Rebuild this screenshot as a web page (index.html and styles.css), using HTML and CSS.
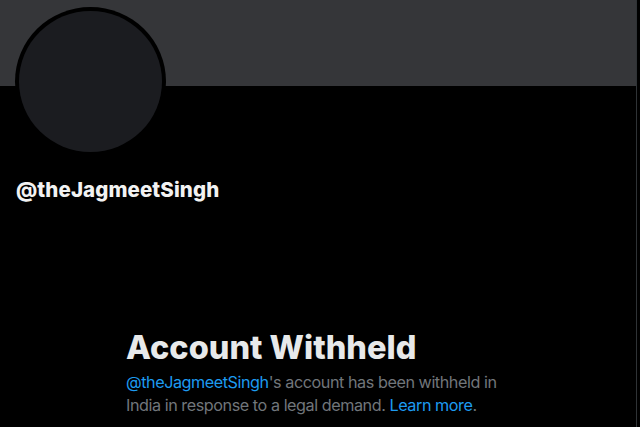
FILE: index.html
```html
<!DOCTYPE html>
<html lang="en">
<head>
<meta charset="utf-8">
<title>@theJagmeetSingh</title>
<link rel="stylesheet" href="styles.css">
</head>
<body>
<main class="column">
  <div class="banner"></div>
  <div class="profile">
    <div class="avatar"><div class="avatar-inner"></div></div>
    <div class="handle">@theJagmeetSingh</div>
  </div>
  <section class="withheld">
    <h1 class="title">Account Withheld</h1>
    <p class="desc"><a class="link" href="#">@theJagmeetSingh</a>'s account has been withheld in India in response to a legal demand. <a class="link" href="#">Learn more</a>.</p>
  </section>
</main>
</body>
</html>
```
FILE: styles.css
```css
html, body {
  margin: 0;
  padding: 0;
  background: #000;
  height: 100%;
  overflow: hidden;
}
body {
  font-family: "Inter", "Noto Sans", "Liberation Sans", sans-serif;
  color: #e7e9ea;
}
.column {
  width: 636px;
  height: 427px;
  border-right: 1px solid #2f3336;
  display: flex;
  flex-direction: column;
}
.banner {
  height: 86px;
  background: #353639;
  flex: none;
}
.profile {
  padding-left: 15px;
  display: flex;
  flex-direction: column;
}
.avatar {
  width: 151px;
  height: 149px;
  margin-top: -79px;
  border-radius: 50%;
  background: #000;
  display: flex;
  align-items: center;
  justify-content: center;
}
.avatar-inner {
  width: 143px;
  height: 141px;
  border-radius: 50%;
  background: #1b1c20;
}
.handle {
  margin-top: 22px;
  margin-left: 1px;
  font-size: 20.5px;
  font-weight: 800;
  line-height: 24px;
  letter-spacing: 0.1px;
  color: #f2f2f2;
}
.withheld {
  margin-top: 126px;
  padding-left: 126px;
  width: 400px;
}
.title {
  margin: 0;
  font-size: 32.5px;
  font-weight: 800;
  line-height: 40px;
  color: #e7e9ea;
}
.desc {
  margin: 3px 0 0;
  font-size: 16.2px;
  line-height: 23px;
  letter-spacing: -0.45px;
  color: #71767b;
}
.link {
  color: #1d9bf0;
  text-decoration: none;
}
```
